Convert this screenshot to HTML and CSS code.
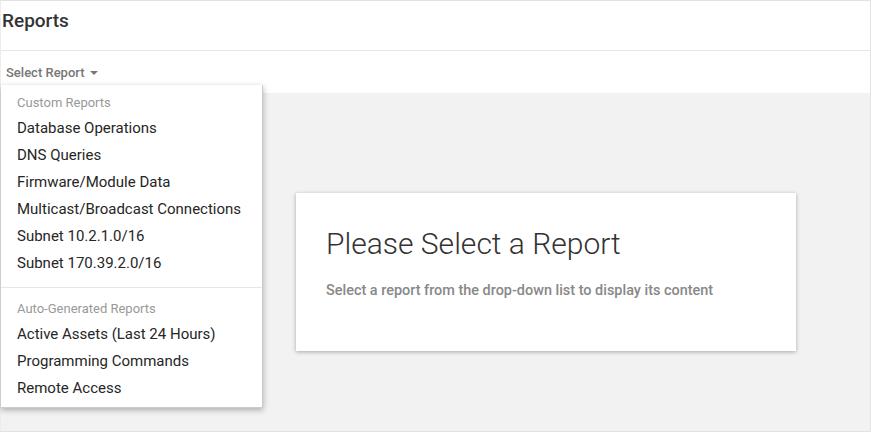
FILE: index.html
```html
<!DOCTYPE html>
<html>
<head>
<meta charset="utf-8">
<link rel="stylesheet" href="styles.css">
</head>
<body>
<div class="page">
  <header class="header"><h1 class="title">Reports</h1></header>
  <div class="toolbar">
    <div class="select">Select Report <span class="caret"></span></div>
    <div class="menu">
      <div class="group">
        <div class="group-label">Custom Reports</div>
        <div class="item">Database Operations</div>
        <div class="item">DNS Queries</div>
        <div class="item">Firmware/Module Data</div>
        <div class="item">Multicast/Broadcast Connections</div>
        <div class="item">Subnet 10.2.1.0/16</div>
        <div class="item">Subnet 170.39.2.0/16</div>
      </div>
      <div class="group second">
        <div class="group-label">Auto-Generated Reports</div>
        <div class="item">Active Assets (Last 24 Hours)</div>
        <div class="item">Programming Commands</div>
        <div class="item">Remote Access</div>
      </div>
    </div>
  </div>
  <main class="content">
    <div class="card">
      <h2 class="card-title">Please Select a Report</h2>
      <p class="card-text">Select a report from the drop-down list to display its content</p>
    </div>
  </main>
</div>
</body>
</html>
```
FILE: styles.css
```css
* { box-sizing: border-box; }
html, body { margin: 0; padding: 0; }
body { font-family: Roboto, "Noto Sans", sans-serif; background: #fff; }
.page {
  width: 871px; height: 432px;
  border: 1px solid #e2e2e2;
  border-left-color: #ececec;
  display: flex; flex-direction: column;
  position: relative;
}
.header {
  height: 50px;
  border-bottom: 1px solid #e6e6e6;
  display: flex; align-items: center;
  padding-left: 1px;
  flex: none;
}
.title {
  margin: 0; font-size: 19px; font-weight: 500; color: #333;
  position: relative; top: -5px;
}
.toolbar {
  height: 42px; flex: none;
  display: flex; align-items: center;
  padding-left: 5px;
  position: relative;
}
.select {
  font-size: 13px; font-weight: 500; color: #777;
  display: flex; align-items: center; gap: 5px;
}
.caret {
  width: 0; height: 0;
  border-left: 4px solid transparent;
  border-right: 4px solid transparent;
  border-top: 4px solid #777;
  margin-top: 1px;
}
.menu {
  position: absolute; left: 0; top: 34px;
  width: 262px;
  background: #fff;
  box-shadow: 0 2px 6px rgba(0,0,0,0.3);
  border-right: 1px solid #ccc;
  border-bottom: 1px solid #ccc;
  z-index: 5;
}
.group { padding: 9px 0 10px; }
.group.second { border-top: 1px solid #e6e6e6; padding-top: 12px; padding-bottom: 5px; }
.group-label {
  font-size: 13px; color: #999; padding-left: 16px; height: 18px; line-height: 18px;
  margin-bottom: 3px;
}
.item {
  font-size: 15px; color: #262626; padding-left: 16px; height: 27px; line-height: 27px;
}
.content {
  flex: 1; background: #f2f2f2;
  padding: 100px 0 0 295px;
}
.card {
  width: 500px; height: 158px;
  background: #fff;
  box-shadow: 0 1px 4px rgba(0,0,0,0.3);
  padding: 33px 30px 0;
}
.card-title {
  margin: 0; font-size: 30px; font-weight: 300; color: #333; line-height: 36px;
}
.card-text {
  margin: 20px 0 0; font-size: 14.45px; font-weight: 500; color: #888;
}
```
